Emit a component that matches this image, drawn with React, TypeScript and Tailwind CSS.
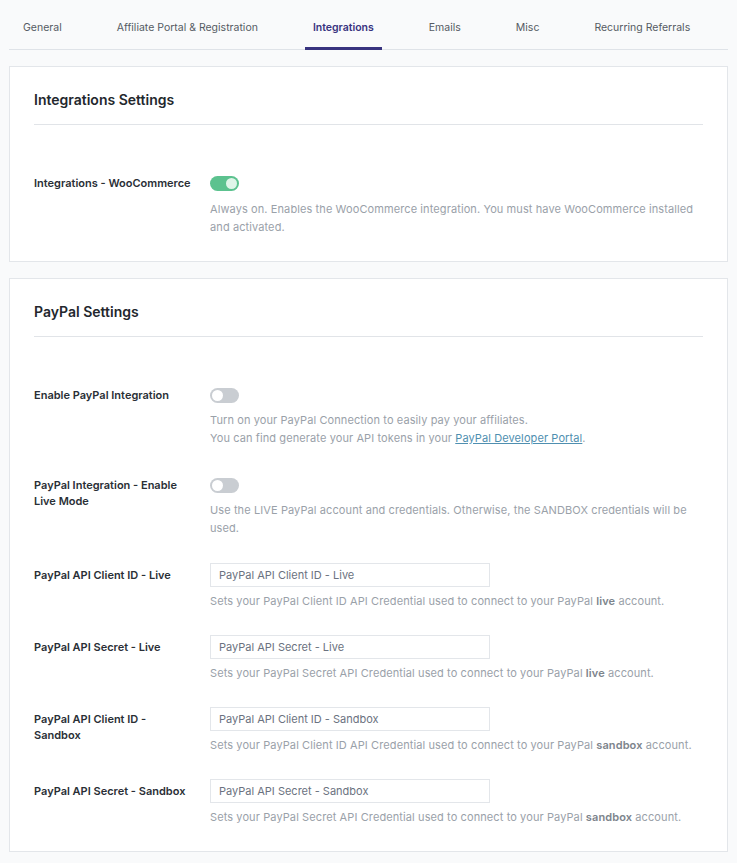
import React from "react";

const font = { fontFamily: "Inter, 'Noto Sans', sans-serif" };

function Toggle({ on }: { on: boolean }) {
  return (
    <div className="flex h-4 items-center">
      <div
        className={
          on
            ? "flex h-[15px] w-[29px] items-center justify-end rounded-full bg-[#5cc28f] px-[2px]"
            : "flex h-[15px] w-[29px] items-center justify-start rounded-full bg-[#c9cdd2] px-[2px]"
        }
      >
        <div className={on ? "h-[11px] w-[11px] rounded-full bg-[#dff5e9]" : "h-[11px] w-[11px] rounded-full bg-white"} />
      </div>
    </div>
  );
}

function Row({ label, children, input }: { label: React.ReactNode; children: React.ReactNode; input?: boolean }) {
  return (
    <div className="flex">
      <div className={input ? "w-[176px] shrink-0 pt-1 pr-3 text-[11px] font-semibold leading-4 text-[#2a2f36]" : "w-[176px] shrink-0 pr-3 text-[11px] font-semibold leading-4 text-[#2a2f36]"}>
        {label}
      </div>
      <div className="flex-1">{children}</div>
    </div>
  );
}

function Desc({ children, tight }: { children: React.ReactNode; tight?: boolean }) {
  return (
    <div className={tight ? "mt-[5px] text-[11px] leading-[18px] tracking-[0.1px] text-[#9aa1a9]" : "mt-2 text-[11px] leading-[18px] tracking-[0.1px] text-[#9aa1a9]"}>
      {children}
    </div>
  );
}

function Input({ placeholder }: { placeholder: string }) {
  return (
    <div className="flex h-6 w-[280px] items-center border border-[#e3e6ea] bg-white px-2 text-[11px] text-[#6b7280]">
      {placeholder}
    </div>
  );
}

const B = ({ children }: { children: React.ReactNode }) => <span className="font-semibold text-[#7d848c]">{children}</span>;

export default function App() {
  const tabs = ["General", "Affiliate Portal & Registration", "Integrations", "Emails", "Misc", "Recurring Referrals"];
  return (
    <div className="min-h-[863px] w-[737px] bg-[#f9fafb] px-[9px] pb-4" style={font}>
      <div className="flex gap-[39px] border-b border-[#dfe3e8] pl-[6px]">
        {tabs.map((t) =>
          t === "Integrations" ? (
            <div key={t} className="-mb-px border-b-[3px] border-[#38337f] px-2 pt-5 pb-[10px] text-[10.5px] font-semibold leading-4 text-[#38337f]">
              {t}
            </div>
          ) : (
            <div key={t} className="px-2 pt-5 pb-[13px] text-[10.5px] leading-4 text-[#555b63]">
              {t}
            </div>
          )
        )}
      </div>

      <div className="mt-4 border border-[#e3e6ea] bg-white px-6 pt-[23px] pb-[25px]">
        <div className="border-b border-[#e1e4e8] pb-[14px] text-[14px] font-semibold leading-5 text-[#23272d]">Integrations Settings</div>
        <div className="pt-[50px]">
          <Row label="Integrations - WooCommerce">
            <Toggle on />
            <div className="pt-px">
              <Desc>Always on. Enables the WooCommerce integration. You must have WooCommerce installed and activated.</Desc>
            </div>
          </Row>
        </div>
      </div>

      <div className="mt-4 border border-[#e3e6ea] bg-white px-6 pt-[23px] pb-[25px]">
        <div className="border-b border-[#e1e4e8] pb-[14px] text-[14px] font-semibold leading-5 text-[#23272d]">PayPal Settings</div>
        <div className="flex flex-col gap-[30px] pt-[50px]">
          <Row label="Enable PayPal Integration">
            <Toggle on={false} />
            <Desc>
              Turn on your PayPal Connection to easily pay your affiliates.
              <br />
              You can find generate your API tokens in your{" "}
              <span className="text-[#4f8fb0] underline">PayPal Developer Portal</span>.
            </Desc>
          </Row>
          <Row label={<>PayPal Integration - Enable<br />Live Mode</>}>
            <Toggle on={false} />
            <Desc>Use the LIVE PayPal account and credentials. Otherwise, the SANDBOX credentials will be used.</Desc>
          </Row>
          <div className="-mt-1 flex flex-col gap-[25px]">
            <Row input label="PayPal API Client ID - Live">
              <Input placeholder="PayPal API Client ID - Live" />
              <Desc tight>
                Sets your PayPal Client ID API Credential used to connect to your PayPal <B>live</B> account.
              </Desc>
            </Row>
            <Row input label="PayPal API Secret - Live">
              <Input placeholder="PayPal API Secret - Live" />
              <Desc tight>
                Sets your PayPal Secret API Credential used to connect to your PayPal <B>live</B> account.
              </Desc>
            </Row>
            <Row input label={<>PayPal API Client ID -<br />Sandbox</>}>
              <Input placeholder="PayPal API Client ID - Sandbox" />
              <Desc tight>
                Sets your PayPal Client ID API Credential used to connect to your PayPal <B>sandbox</B> account.
              </Desc>
            </Row>
            <Row input label="PayPal API Secret - Sandbox">
              <Input placeholder="PayPal API Secret - Sandbox" />
              <Desc tight>
                Sets your PayPal Secret API Credential used to connect to your PayPal <B>sandbox</B> account.
              </Desc>
            </Row>
          </div>
        </div>
      </div>
    </div>
  );
}
